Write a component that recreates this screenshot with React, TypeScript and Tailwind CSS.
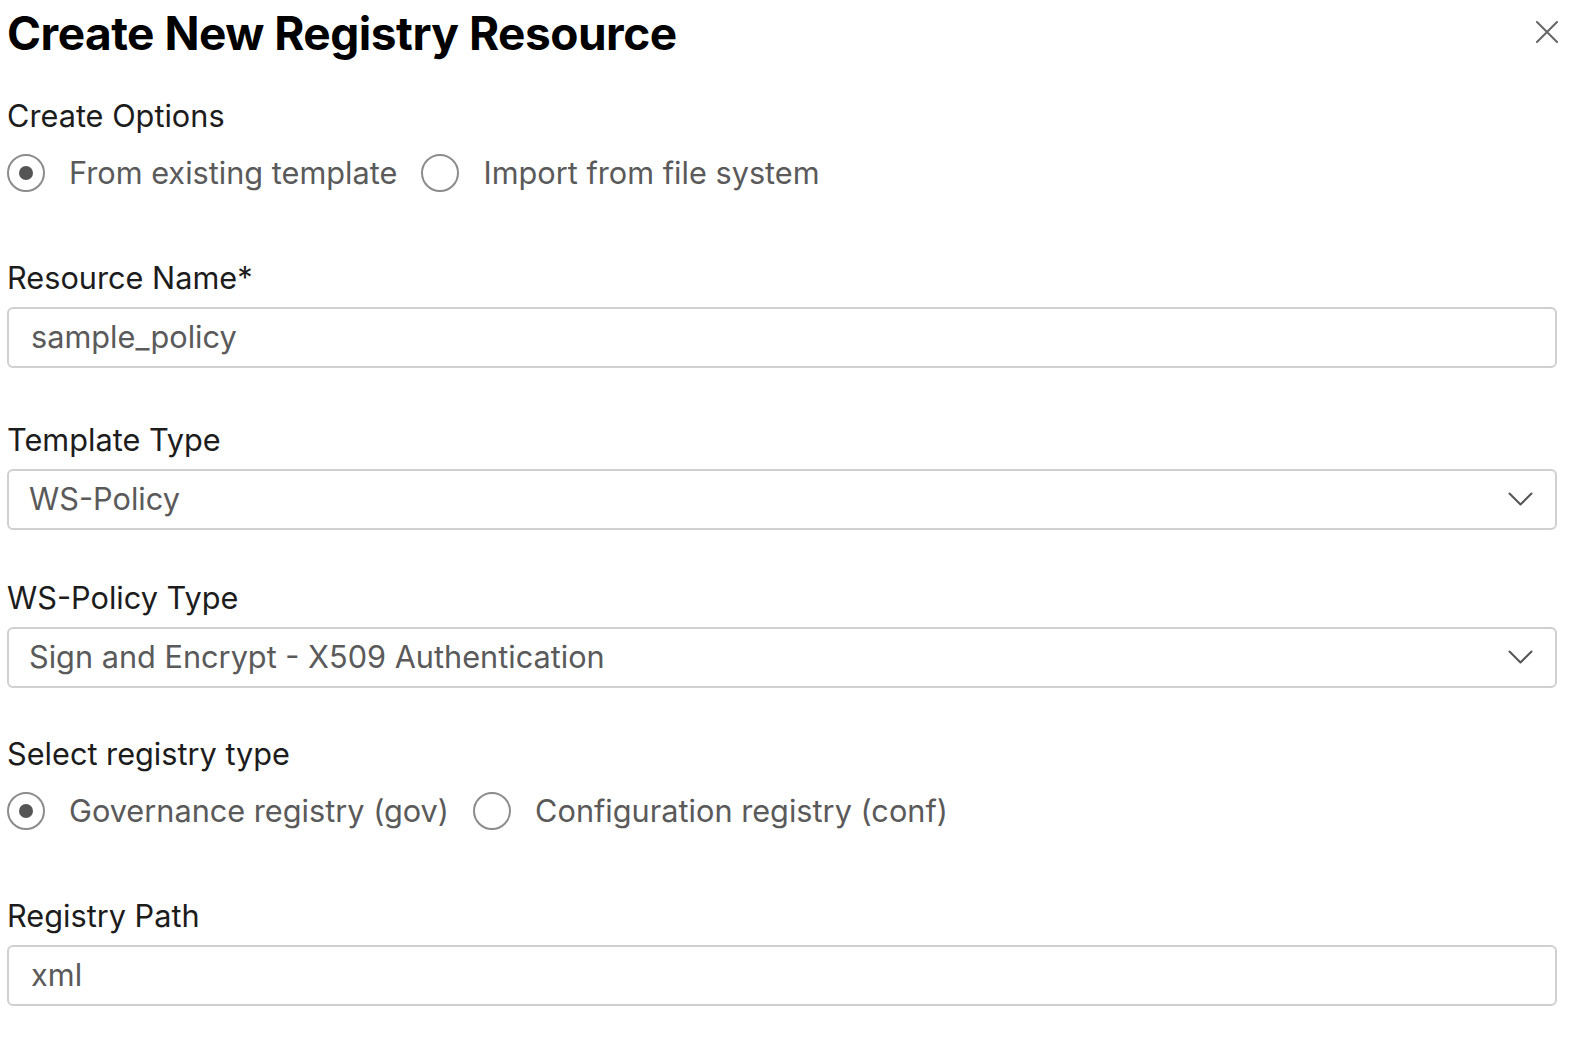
const font = { fontFamily: 'Inter, "Noto Sans", sans-serif' };

function Radio({ label, checked }: { label: string; checked?: boolean }) {
  return (
    <label className="flex items-center gap-[24px]">
      <span className="flex h-[38px] w-[38px] items-center justify-center rounded-full border-2 border-[#8c8c8c] bg-white">
        {checked && <span className="h-[14px] w-[14px] rounded-full bg-[#555555]"></span>}
      </span>
      <span className="text-[30.7px] leading-[40px] text-[#5a5a5a]">{label}</span>
    </label>
  );
}

function Label({ text }: { text: string }) {
  return <div className="text-[30.7px] leading-[36px] text-[#1c1c1c]">{text}</div>;
}

function TextInput({ value }: { value: string }) {
  return (
    <div className="mt-[11px] flex h-[61px] items-center rounded-[6px] border-2 border-[#d0d0d0] bg-white pl-[22px] text-[30.7px] text-[#5a5a5a]">
      {value}
    </div>
  );
}

function Select({ value }: { value: string }) {
  return (
    <div className="mt-[11px] flex h-[61px] items-center justify-between rounded-[6px] border-2 border-[#d0d0d0] bg-white pl-[20px] pr-[22px] text-[30.7px] text-[#5a5a5a]">
      <span>{value}</span>
      <svg width="25" height="15" viewBox="0 0 25 15" fill="none">
        <path d="M1.5 1.5 L12.5 12.5 L23.5 1.5" stroke="#555555" strokeWidth="2" strokeLinecap="round" strokeLinejoin="round" />
      </svg>
    </div>
  );
}

export default function App() {
  return (
    <div className="min-h-screen bg-white pl-[7px] pr-[23px]" style={font}>
      {/* Header */}
      <div className="flex items-start justify-between pt-[5px]">
        <h1 className="text-[46px] font-bold leading-[56px] tracking-[-0.5px] text-black">
          Create New Registry Resource
        </h1>
        <button className="mr-[-1px] mt-[16px] text-[#666666]">
          <svg width="22" height="22" viewBox="0 0 22 22" fill="none">
            <path d="M1 1 L21 21 M21 1 L1 21" stroke="#666666" strokeWidth="2" strokeLinecap="round" />
          </svg>
        </button>
      </div>

      {/* Create options */}
      <div className="mt-[37px]">
        <Label text="Create Options" />
        <div className="mt-[19px] flex items-center gap-[24px]">
          <Radio label="From existing template" checked />
          <Radio label="Import from file system" />
        </div>
      </div>

      <div className="mt-[67px]">
        <Label text="Resource Name*" />
        <TextInput value="sample_policy" />
      </div>

      <div className="mt-[54px]">
        <Label text="Template Type" />
        <Select value="WS-Policy" />
      </div>

      <div className="mt-[50px]">
        <Label text="WS-Policy Type" />
        <Select value="Sign and Encrypt - X509 Authentication" />
      </div>

      <div className="mt-[48px]">
        <Label text="Select registry type" />
        <div className="mt-[19px] flex items-center gap-[24px]">
          <Radio label="Governance registry (gov)" checked />
          <Radio label="Configuration registry (conf)" />
        </div>
      </div>

      <div className="mt-[67px]">
        <Label text="Registry Path" />
        <TextInput value="xml" />
      </div>
    </div>
  );
}
